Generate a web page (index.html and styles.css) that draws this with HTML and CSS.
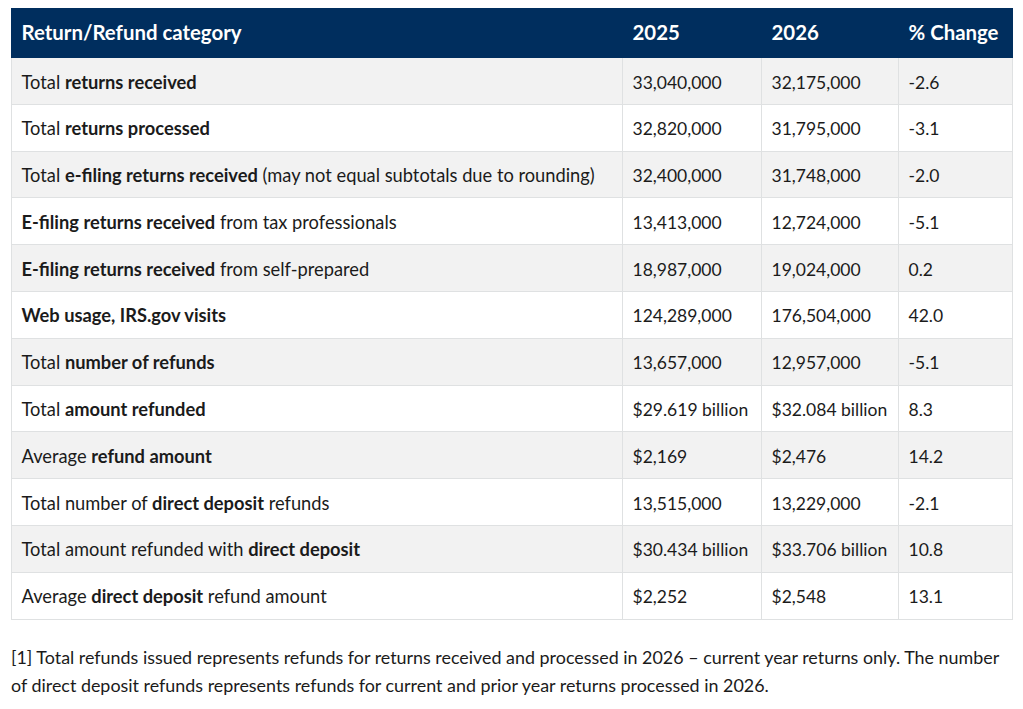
FILE: index.html
```html
<!DOCTYPE html>
<html lang="en">
<head>
<meta charset="utf-8">
<title>Filing season statistics</title>
<link rel="stylesheet" href="styles.css">
</head>
<body>
<div class="wrap">
<table class="stats">
  <colgroup>
    <col class="c1"><col class="c2"><col class="c3"><col class="c4">
  </colgroup>
  <thead>
    <tr><th>Return/Refund category</th><th>2025</th><th>2026</th><th>% Change</th></tr>
  </thead>
  <tbody>
    <tr><td>Total <b>returns received</b></td><td class="num">33,040,000</td><td class="num">32,175,000</td><td class="num">-2.6</td></tr>
    <tr><td>Total <b>returns processed</b></td><td class="num">32,820,000</td><td class="num">31,795,000</td><td class="num">-3.1</td></tr>
    <tr><td>Total <b>e-filing returns received</b> (may not equal subtotals due to rounding)</td><td class="num">32,400,000</td><td class="num">31,748,000</td><td class="num">-2.0</td></tr>
    <tr><td><b>E-filing returns received</b> from tax professionals</td><td class="num">13,413,000</td><td class="num">12,724,000</td><td class="num">-5.1</td></tr>
    <tr><td><b>E-filing returns received</b> from self-prepared</td><td class="num">18,987,000</td><td class="num">19,024,000</td><td class="num">0.2</td></tr>
    <tr><td><b>Web usage, IRS.gov visits</b></td><td class="num">124,289,000</td><td class="num">176,504,000</td><td class="num">42.0</td></tr>
    <tr><td>Total <b>number of refunds</b></td><td class="num">13,657,000</td><td class="num">12,957,000</td><td class="num">-5.1</td></tr>
    <tr><td>Total <b>amount refunded</b></td><td class="num">$29.619 billion</td><td class="num">$32.084 billion</td><td class="num">8.3</td></tr>
    <tr><td>Average <b>refund amount</b></td><td class="num">$2,169</td><td class="num">$2,476</td><td class="num">14.2</td></tr>
    <tr><td>Total number of <b>direct deposit</b> refunds</td><td class="num">13,515,000</td><td class="num">13,229,000</td><td class="num">-2.1</td></tr>
    <tr><td>Total amount refunded with <b>direct deposit</b></td><td class="num">$30.434 billion</td><td class="num">$33.706 billion</td><td class="num">10.8</td></tr>
    <tr><td>Average <b>direct deposit</b> refund amount</td><td class="num">$2,252</td><td class="num">$2,548</td><td class="num">13.1</td></tr>
  </tbody>
</table>
<p class="note">[1] Total refunds issued represents refunds for returns received and processed in 2026 – current year returns only. The number of direct deposit refunds represents refunds for current and prior year returns processed in 2026.</p>
</div>
</body>
</html>
```
FILE: styles.css
```css
html, body {
  margin: 0;
  padding: 0;
  background: #ffffff;
}
body {
  font-family: "Lato", "Noto Sans", sans-serif;
  color: #1b1b1b;
  font-size: 18px;
}
.wrap {
  padding: 8px 11px 0 11px;
  width: 1001px;
}
.stats {
  border-collapse: collapse;
  table-layout: fixed;
  width: 1001px;
}
.c1 { width: 611px; }
.c2 { width: 139px; }
.c3 { width: 137px; }
.c4 { width: 114px; }
.stats th {
  background: #002e5e;
  color: #ffffff;
  font-weight: 700;
  font-size: 20.4px;
  text-align: left;
  padding: 8.5px 9.5px 11.5px 9.5px;
  line-height: 28px;
  border: 1px solid #002e5e;
}
.stats td {
  padding: 11.5px 9.5px 8.5px 9.5px;
  font-size: 18.3px;
  line-height: 25.8px;
  border: 1px solid #dfe1e2;
  vertical-align: middle;
  white-space: nowrap;
}
.stats td.num {
  font-size: 17.5px;
}
.stats tbody tr:nth-child(odd) td {
  background: #f2f2f2;
}
.stats td b {
  font-weight: 700;
}
.note {
  margin: 23px 0 0 0;
  font-size: 17.9px;
  line-height: 28px;
}
```
